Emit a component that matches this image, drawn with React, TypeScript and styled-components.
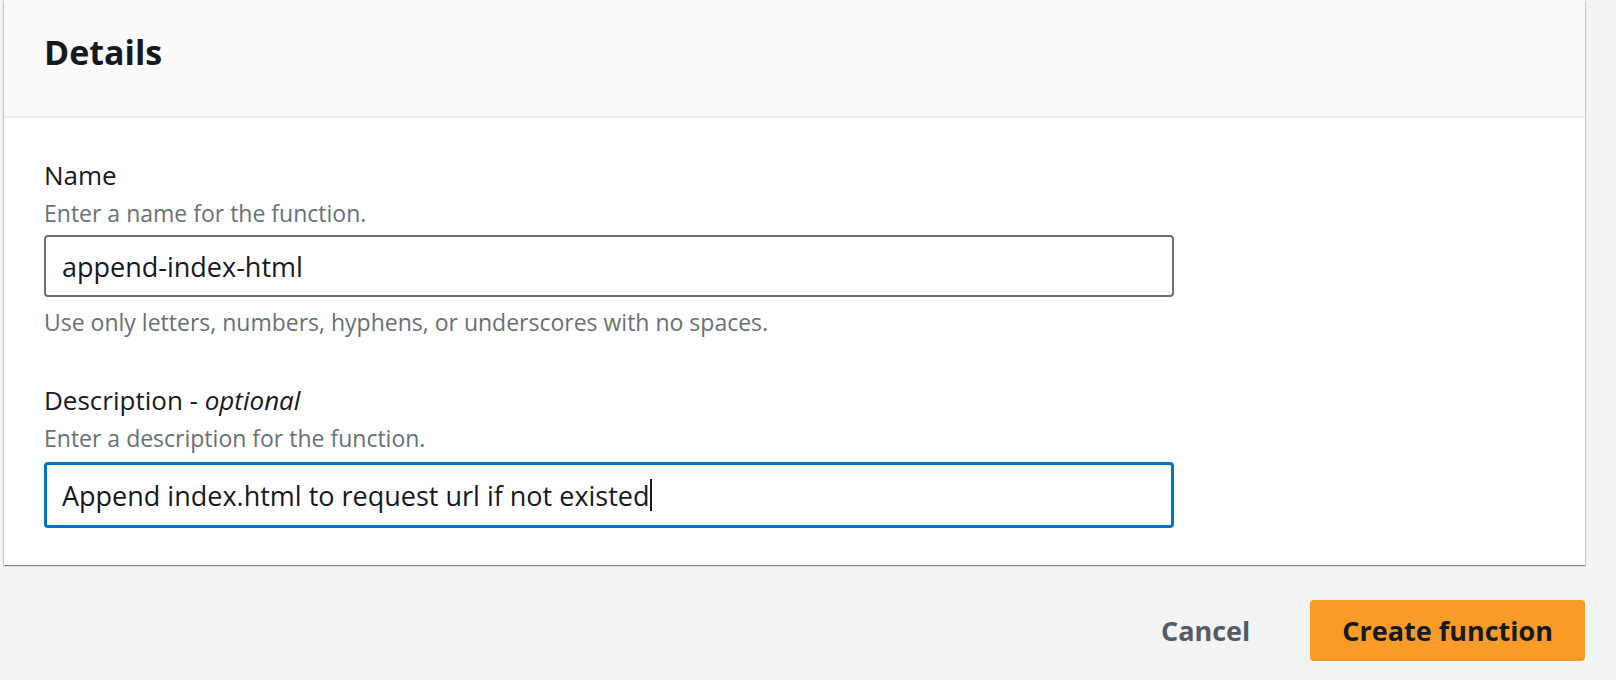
import styled, { createGlobalStyle } from 'styled-components';

const GlobalStyle = createGlobalStyle`
  html, body {
    margin: 0;
    padding: 0;
    background: #f2f3f3;
    font-family: 'Open Sans', 'Noto Sans', Arial, sans-serif;
    color: #16191f;
  }
`;

function App() {
  return (
    <>
      <GlobalStyle />
      <StyledPage>
        <StyledCard>
          <StyledHeader>
            <StyledTitle>Details</StyledTitle>
          </StyledHeader>

          <StyledBody>
            <StyledField>
              <StyledLabel>Name</StyledLabel>
              <StyledHint>Enter a name for the function.</StyledHint>
              <StyledInput>append-index-html</StyledInput>
              <StyledConstraint>
                Use only letters, numbers, hyphens, or underscores with no spaces.
              </StyledConstraint>
            </StyledField>

            <StyledField>
              <StyledLabel>
                Description - <em>optional</em>
              </StyledLabel>
              <StyledHint>Enter a description for the function.</StyledHint>
              <StyledInput $focused>
                Append index.html to request url if not existed
                <StyledCaret />
              </StyledInput>
            </StyledField>
          </StyledBody>
        </StyledCard>

        <StyledActions>
          <StyledLinkButton>Cancel</StyledLinkButton>
          <StyledPrimaryButton>Create function</StyledPrimaryButton>
        </StyledActions>
      </StyledPage>
    </>
  );
}

export default App;

const StyledPage = styled.div`
  width: 1585px;
  padding-left: 4px;
  height: 680px;
  box-sizing: border-box;
`;

const StyledCard = styled.section`
  background: #ffffff;
  box-shadow: 0 1px 1px 0 rgba(0, 28, 36, 0.3), 1px 1px 1px 0 rgba(0, 28, 36, 0.15),
    -1px 1px 1px 0 rgba(0, 28, 36, 0.15);
`;

const StyledHeader = styled.header`
  background: #fafafa;
  border-bottom: 2px solid #eaeded;
  height: 118px;
  box-sizing: border-box;
  padding: 28px 40px 0;
`;

const StyledTitle = styled.h2`
  margin: 0;
  font-size: 34px;
  font-weight: 700;
  line-height: 48px;
`;

const StyledBody = styled.div`
  display: flex;
  flex-direction: column;
  gap: 46px;
  padding: 40px 40px 37px;
`;

const StyledField = styled.div`
  display: flex;
  flex-direction: column;
`;

const StyledLabel = styled.label`
  font-size: 26px;
  line-height: 34px;

  em {
    font-style: italic;
  }
`;

const StyledHint = styled.p`
  margin: 6px 0 7px;
  font-size: 23px;
  line-height: 30px;
  color: #687078;
`;

const StyledInput = styled.div<{ $focused?: boolean }>`
  width: 1130px;
  height: ${(p) => (p.$focused ? '66px' : '62px')};
  margin-top: ${(p) => (p.$focused ? '2px' : '0')};
  box-sizing: border-box;
  display: flex;
  align-items: center;
  padding: 0 ${(p) => (p.$focused ? '15px' : '16px')};
  border: ${(p) => (p.$focused ? '3px solid #0073bb' : '2px solid #687078')};
  border-radius: 4px;
  font-size: 27px;
  color: #16191f;
`;

const StyledCaret = styled.span`
  display: inline-block;
  width: 2px;
  height: 32px;
  background: #16191f;
`;

const StyledConstraint = styled.p`
  margin: 10px 0 0;
  font-size: 23px;
  line-height: 30px;
  color: #687078;
`;

const StyledActions = styled.div`
  display: flex;
  justify-content: flex-end;
  align-items: center;
  gap: 40px;
  padding-top: 35px;
`;

const StyledLinkButton = styled.button`
  background: none;
  border: none;
  font-family: inherit;
  font-size: 27px;
  font-weight: 700;
  color: #545b64;
  padding: 0 20px;
`;

const StyledPrimaryButton = styled.button`
  background: #f99b29;
  border: none;
  border-radius: 4px;
  height: 61px;
  padding: 0 32px;
  font-family: inherit;
  font-size: 27px;
  font-weight: 700;
  color: #16191f;
`;
